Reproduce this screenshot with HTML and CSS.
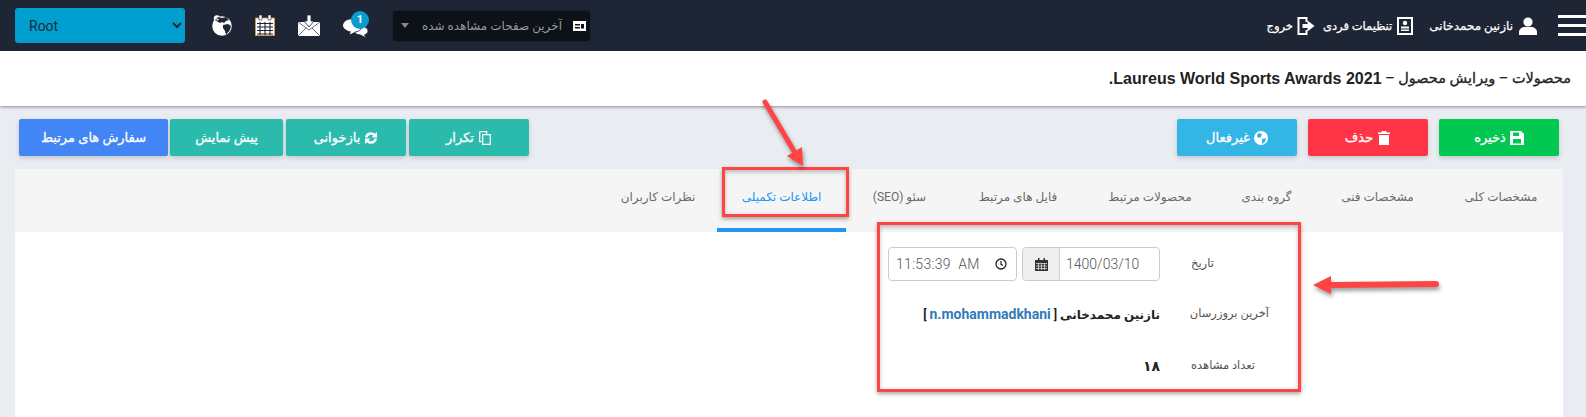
FILE: index.html
```html
<!DOCTYPE html>
<html lang="fa" dir="rtl">
<head>
<meta charset="UTF-8">
<meta name="viewport" content="width=device-width, initial-scale=1.0">
<title>ویرایش محصول</title>
<link rel="stylesheet" href="styles.css">
</head>
<body>
    <header class="topbar">
        <div class="burger"><span></span><span></span><span></span></div>
        <a class="user-link first">
            <svg class="ic" viewBox="0 0 18 18"><circle cx="9" cy="5" r="4.600" fill="#fff"/><path d="M0 18v-3c0-3 3-5 6-5h6c3 0 6 2 6 5v3z" fill="#fff"/></svg>
            نازنین محمدخانی
        </a>
        <a class="user-link small">
            <svg class="ic" viewBox="0 0 18 18"><path d="M1 0h16v18H1z" fill="#fff"/><path d="M3 2h12v14H3z" fill="#1e2535"/><circle cx="9" cy="6" r="2.200" fill="#fff"/><path d="M5 9.500h8v2H5zM5 12.500h8v1.600H5z" fill="#fff"/></svg>
            تنظیمات فردی
        </a>
        <a class="user-link small">
            <svg class="ic" viewBox="0 0 17 18"><path d="M0 0h10v5H8V2H2v14h6v-3h2v5H0z" fill="#fff"/><path d="M5 7h5V3.500l7 5.500-7 5.500V11H5z" fill="#fff"/></svg>
            خروج
        </a>

        <div class="topbar-left">
            <div class="recent">
                <svg class="recent-ic" viewBox="0 0 13 10"><path d="M0 0h13v10H0z" fill="#fff"/><path d="M2 3h5v1.500H2zM2 6h5v1.500H2zM8 3h3v4.500H8z" fill="#111"/></svg>
                <span class="recent-text">آخرین صفحات مشاهده شده</span>
                <span class="caret"></span>
            </div>
            <div class="quick">
                <span class="quick-item chat">
                    <svg viewBox="0 0 26 24" width="26" height="24"><path d="M10 5c5.500 0 10 2.800 10 6.500 0 3.300-3.500 6-8 6.500l-5.500 2.500 1.500-3C3.500 16.800 0 14.500 0 11.500 0 7.800 4.500 5 10 5z" fill="#fff"/><path d="M19 12.500c3 0 6 1.800 6 4.500 0 1.800-1.500 3.200-3.500 3.800l1.500 3-6-3c-2.500 0-4.500-1-5.500-2.500 4-.6 7.500-3 7.500-5.800z" fill="#fff" stroke="#1e2535" stroke-width=".8"/></svg>
                    <b class="badge">1</b>
                </span>
                <span class="quick-item">
                    <svg viewBox="0 0 22 21" width="22" height="21"><path d="M0 7h6l5-2 5 2h6v14H0z" fill="#fff"/><path d="M0 7l11 8 11-8M0 21l8-8M22 21l-8-8" fill="none" stroke="#6b7080" stroke-width="1"/><path d="M9 0h4v6h3l-5 6-5-6h3z" fill="#fff" stroke="#1e2535" stroke-width=".8"/></svg>
                </span>
                <span class="quick-item">
                    <svg viewBox="0 0 20 21" width="20" height="21"><path d="M.5 3h19v17.500H.5z" fill="#fff" stroke="#e39a3c" stroke-width=".8"/><path d="M2 8.500h16M2 12h16M2 15.500h16M2 19h16M5 7v13M10 7v13M15 7v13" stroke="#1e2535" stroke-width="1.100"/><path d="M4 0h3v5H4zM13 0h3v5h-3z" fill="#fff" stroke="#1e2535" stroke-width=".6"/></svg>
                </span>
                <span class="quick-item">
                    <svg viewBox="0 0 20 21" width="20" height="21"><circle cx="10" cy="11" r="9.800" fill="#fff"/><circle cx="5" cy="3.500" r="3.200" fill="#fff"/><path d="M3 5l3-3 4 1 4-1 3 3-3 1-2 2-2-1-2 1-2-1z" fill="#1e2535"/><circle cx="5.500" cy="4.500" r="1.100" fill="#fff"/><path d="M11 10l5-1 3 2-1 4-4 5-1-4-2-3z" fill="#1e2535"/></svg>
                </span>
            </div>
            <select class="site-select" dir="ltr"><option>Root</option></select>
        </div>
    </header>

    <div class="page-title"><span>محصولات – ویرایش محصول –&nbsp;</span><span class="title-en">Laureus World Sports Awards 2021.</span></div>

    <div class="actions">
        <a class="btn btn-wide green">
            <svg class="btn-ic" viewBox="0 0 14 14"><path d="M0 0h11l3 3v11H0z" fill="#fff"/><path d="M3 1.500h6v3.500H3zM3 8h8v4.500H3z" fill="#00c851"/></svg>
            ذخیره
        </a>
        <a class="btn btn-wide red">
            <svg class="btn-ic" viewBox="0 0 12 14"><path d="M4 0h4l1 1.500h3v1.500H0V1.500h3zM1 4h10v10H1z" fill="#fff"/></svg>
            حذف
        </a>
        <a class="btn btn-wide sky">
            <svg class="btn-ic" viewBox="0 0 14 14"><circle cx="7" cy="7" r="7" fill="#fff"/><path d="M4 2l4 1-1 3-3 1-1-2zM8 8l4-1-1 4-3 2z" fill="#33b5e5"/></svg>
            غیرفعال
        </a>
        <div class="actions-left">
            <a class="btn teal w-copy">
                <svg class="btn-ic" viewBox="0 0 12 14"><path d="M.7.700h7v2M.7.700v10h2M3.700 3.700h7.600v9.600H3.700z" fill="none" stroke="#fff" stroke-width="1.300"/></svg>
                تکرار
            </a>
            <a class="btn teal w-reload">
                <svg class="btn-ic" viewBox="0 0 14 14"><path d="M1 6.500a6 6 0 0 1 10-3.700L13 1v5.500H7.500l2-2a3.800 3.800 0 0 0-6 2zM13 7.500a6 6 0 0 1-10 3.700L1 13V7.500h5.500l-2 2a3.800 3.800 0 0 0 6-2z" fill="#fff"/></svg>
                بازخوانی
            </a>
            <a class="btn teal w-preview">پیش نمایش</a>
            <a class="btn blue w-orders">سفارش های مرتبط</a>
        </div>
    </div>

    <section class="panel">
        <nav class="tabs">
            <a class="tab">مشخصات کلی</a>
            <a class="tab">مشخصات فنی</a>
            <a class="tab">گروه بندی</a>
            <a class="tab">محصولات مرتبط</a>
            <a class="tab">فایل های مرتبط</a>
            <a class="tab">سئو (SEO)</a>
            <a class="tab active">اطلاعات تکمیلی</a>
            <a class="tab">نظرات کاربران</a>
        </nav>
        <div class="form">
            <div class="row row-date">
                <label>تاریخ</label>
                <div class="date-group">
                    <span class="date-input" dir="ltr">1400/03/10</span>
                    <span class="addon">
                        <svg viewBox="0 0 13 13" width="13" height="13"><path d="M0 2h13v11H0z" fill="#333"/><path d="M3 0h1.500v3H3zM8.500 0H10v3H8.500z" fill="#333"/><path d="M1 5.500h11M1 8h11M1 10.500h11M3.500 5v7M6.500 5v7M9.500 5v7" stroke="#eee" stroke-width=".7"/></svg>
                    </span>
                </div>
                <div class="time-input" dir="ltr">
                    <span>11:53:39&nbsp; AM</span>
                    <svg viewBox="0 0 12 12" width="12" height="12"><circle cx="6" cy="6" r="5" fill="none" stroke="#222" stroke-width="1.300"/><path d="M6 3v3.300l2 1.200" fill="none" stroke="#222" stroke-width="1.200"/></svg>
                </div>
            </div>
            <div class="row row-update">
                <label>آخرین بروزرسان</label>
                <div class="value">نازنین محمدخانی [ <a class="uname">n.mohammadkhani</a> ]</div>
            </div>
            <div class="row row-views">
                <label>تعداد مشاهده</label>
                <div class="value count">۱۸</div>
            </div>
        </div>
    </section>

    <!-- annotation marks drawn on top of the screenshot -->
    <div class="mark mark-tab"></div>
    <div class="mark mark-form"></div>
    <svg class="arrows" width="1586" height="417" viewBox="0 0 1586 417">
        <path d="M765 102L794 151" stroke="#ff4444" stroke-width="5" stroke-linecap="round"/>
        <path d="M803 166L787 156L802 147Z" fill="#ff4444"/>
        <path d="M1331 285L1436 284" stroke="#ff4444" stroke-width="6" stroke-linecap="round"/>
        <path d="M1313 285L1331 276L1331 294Z" fill="#ff4444"/>
    </svg>
</body>
</html>
```
FILE: styles.css
```css
* {
    box-sizing: border-box;
}

html, body {
    height: 417px;
    overflow: hidden;
}

body {
    margin: 0;
    position: relative;
    background-color: #e9ecf1;
    font-family: Roboto, "DejaVu Sans", sans-serif;
    font-size: 12px;
    color: #333;
}

/* top bar */
.topbar {
    height: 51px;
    padding-left: 15px;
    background-color: #1e2535;
    display: flex;
    align-items: center;
    color: #fff;
}

.burger {
    width: 28px;
    display: flex;
    flex-direction: column;
    gap: 6px;
    margin-left: 21px;
}

.burger span {
    height: 3px;
    background-color: #fff;
}

.user-link {
    display: flex;
    align-items: center;
    gap: 6px;
    margin-left: 8px;
    font-size: 12px;
    -webkit-text-stroke: 0.25px #fff;
    white-space: nowrap;
}

.user-link.first {
    margin-left: 15px;
}

.user-link.small {
    gap: 4px;
    font-size: 11.5px;
}

.ic {
    width: 18px;
    height: 18px;
}

.topbar-left {
    margin-right: auto;
    display: flex;
    align-items: center;
}

.recent {
    width: 199px;
    height: 32px;
    margin-left: 23px;
    padding: 0 4px 0 8px;
    display: flex;
    align-items: center;
    background-color: #0d1219;
    border: 1px solid #14232e;
    border-radius: 4px;
    color: #999;
    font-size: 12px;
}

.recent-ic {
    width: 13px;
    height: 10px;
    margin-left: 11px;
}

.caret {
    margin-right: auto;
    border-top: 5px solid #888;
    border-left: 4px solid transparent;
    border-right: 4px solid transparent;
}

.quick {
    display: flex;
    align-items: center;
    gap: 23px;
    margin-left: 27px;
}

.quick-item {
    position: relative;
    display: flex;
}

.badge {
    position: absolute;
    top: -3px;
    left: 8px;
    width: 18px;
    height: 18px;
    border-radius: 50%;
    background-color: #0b9ccf;
    color: #fff;
    font-size: 11px;
    text-align: center;
    line-height: 18px;
}

.site-select {
    width: 170px;
    height: 35px;
    padding: 0 10px;
    border: 0;
    border-radius: 3px;
    background-color: #009fcf;
    color: #1b2a3a;
    font-family: Roboto, sans-serif;
    font-size: 14px;
}

/* title */
.page-title {
    height: 55px;
    padding: 0 15px;
    background-color: #fff;
    box-shadow: 0 1px 3px rgba(0, 0, 0, 0.4);
    display: flex;
    align-items: center;
    font-size: 14.5px;
    -webkit-text-stroke: 0.3px #222;
    color: #222;
    position: relative;
}

.title-en {
    font-family: "Liberation Sans", sans-serif;
    font-size: 16px;
    font-weight: bold;
    -webkit-text-stroke: 0;
}

/* buttons */
.actions {
    display: flex;
    padding: 13px 27px 0 19px;
}

.btn {
    height: 37px;
    display: flex;
    align-items: center;
    justify-content: center;
    gap: 4px;
    border-radius: 2px;
    color: #fff;
    font-size: 13px;
    -webkit-text-stroke: 0.3px #fff;
    box-shadow: 0 2px 5px rgba(0, 0, 0, 0.16);
}

.btn-wide {
    width: 120px;
    margin-left: 11px;
}

.btn-ic {
    height: 14px;
    width: 14px;
}

.green { background-color: #00c851; }
.red { background-color: #ff3547; }
.sky { background-color: #33b5e5; }
.teal { background-color: #2bbbad; }
.blue { background-color: #4285f4; }

.actions-left {
    margin-right: auto;
    display: flex;
    gap: 3px;
}

.w-copy { width: 120px; }
.w-reload { width: 120px; }
.w-preview { width: 113px; }
.w-orders { width: 149px; margin-right: -1px; }

/* tabs */
.panel {
    margin: 13px 23px 0 15px;
    height: 248px;
    background-color: #fff;
}

.tabs {
    height: 63px;
    display: flex;
    background-color: #f5f5f5;
}

.tab {
    height: 63px;
    padding-top: 21px;
    text-align: center;
    color: #6a6a6a;
    font-size: 12px;
    white-space: nowrap;
}

.tab:nth-child(1) { width: 124px; }
.tab:nth-child(2) { width: 123px; }
.tab:nth-child(3) { width: 99px; }
.tab:nth-child(4) { width: 134px; }
.tab:nth-child(5) { width: 130px; }
.tab:nth-child(6) { width: 107px; }
.tab:nth-child(7) { width: 129px; }
.tab:nth-child(8) { width: 118px; }

.tab.active {
    color: #2196f3;
    border-bottom: 4px solid #2196f3;
}

/* form */
.form {
    padding: 15px 294px 0 0;
}

.row {
    display: flex;
    align-items: center;
}

.row label {
    flex: none;
    width: 109px;
    padding-left: 31px;
    padding-bottom: 2px;
    text-align: left;
    color: #555;
    font-size: 11.5px;
    white-space: nowrap;
}

.row-date {
    height: 34px;
}

.row-update {
    margin-top: 16px;
    height: 34px;
}

.row-views {
    margin-top: 18px;
    height: 34px;
}

.date-group {
    width: 138px;
    height: 34px;
    display: flex;
    border: 1px solid #ccc;
    border-radius: 4px;
    overflow: hidden;
}

.date-input {
    flex: 1;
    padding-left: 6px;
    line-height: 32px;
    font-size: 14px;
    font-weight: 300;
    color: #555;
}

.addon {
    width: 37px;
    display: flex;
    align-items: center;
    justify-content: center;
    background-color: #eee;
    border-right: 1px solid #ccc;
}

.time-input {
    width: 129px;
    height: 34px;
    margin-right: 5px;
    padding: 0 9px 0 7px;
    display: flex;
    align-items: center;
    justify-content: space-between;
    border: 1px solid #ccc;
    border-radius: 4px;
    font-size: 14px;
    font-weight: 300;
    letter-spacing: 0.3px;
    color: #555;
}

.value {
    font-size: 12px;
    font-weight: bold;
    color: #222;
}

.uname {
    font-size: 14px;
    color: #337ab7;
}

.count {
    font-size: 14px;
}

/* annotations */
.mark {
    position: absolute;
    border: 3px solid #ff4444;
    box-shadow: 0 2px 4px rgba(0, 0, 0, 0.35), inset 0 2px 4px rgba(0, 0, 0, 0.25);
}

.mark-tab {
    left: 722px;
    top: 167px;
    width: 127px;
    height: 50px;
}

.mark-form {
    left: 877px;
    top: 222px;
    width: 424px;
    height: 170px;
}

.arrows {
    position: absolute;
    left: 0;
    top: 0;
    filter: drop-shadow(1px 3px 2px rgba(0, 0, 0, 0.4));
}
```
